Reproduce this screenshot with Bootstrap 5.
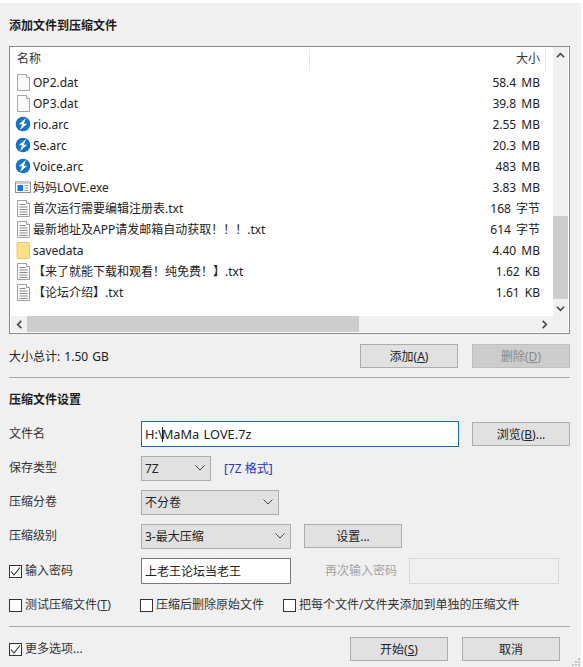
<!DOCTYPE html>
<html lang="zh-CN">
<head>
<meta charset="utf-8">
<title>添加文件到压缩文件</title>
<link href="https://cdn.jsdelivr.net/npm/bootstrap@5.3.0/dist/css/bootstrap.min.css" rel="stylesheet">
<style>
html,body{height:100%;background:#fff;overflow:hidden}
body{font-family:"Noto Sans","Noto Sans CJK SC",sans-serif;font-size:12px;line-height:16px;color:#222}
.dlg{width:581px;height:667px;margin-top:3px;background:#f0f0f0;padding:0 11px 0 9px;position:relative}
.head-t{font-weight:700;height:43px;padding-top:15px;color:#1c1c1c}
.filebox{height:288px;border:1px solid #8a8a8a;background:#fff;position:relative;display:grid;grid-template-columns:1fr 17px;grid-template-rows:1fr 17px}
.cols{height:25px;padding:2px 0 0 7px;color:#333}
.colname{width:293px;height:22px;line-height:20px;border-right:1px solid #e6e6e6}
.colsize{width:236px;height:22px;line-height:20px;text-align:right;padding-right:5px;border-right:1px solid #e6e6e6}
.frow{height:21px;line-height:21px;padding-left:5px;padding-right:2px;width:532px;white-space:nowrap}
.frow svg{width:16px;height:20px;flex:none;margin-right:2px}
.fname{flex:1}
.fsize{word-spacing:2px}
.vbar{background:#f0f0f0;grid-row:1;grid-column:2;display:flex;flex-direction:column;align-items:center;margin-left:1px;width:15px}
.vthumb{background:#cdcdcd;width:15px;height:83px;margin-top:153px}
.hbar{background:#f0f0f0;grid-row:2;grid-column:1/3;display:flex;align-items:center;margin:0 1px 1px}
.hthumb{background:#cdcdcd;width:332px;height:100%}
.arr{width:16px;height:16px;flex:none;display:flex;align-items:center;justify-content:center}
.arr svg{width:9px;height:9px}
.sumrow{height:24px;margin-top:10px}
.sumtxt{padding-top:2px;word-spacing:1px}
.w98{width:98px;height:24px;padding:1px 0 0;font-size:12px;line-height:20px;border-radius:0;background:#e1e1e1;border:1px solid #adadad;color:#222;flex:none}
.w98.off,.w98:disabled{background:#cccccc;border-color:#bfbfbf;color:#8a8a8a;opacity:1}
.gap14{margin-left:14px}
.gap13{margin-left:13px}
.sep{height:1px;background:#a8a8a8;margin:0}
.sep1{margin-top:9px}
.set-t{font-weight:700;margin-top:14px;height:16px;color:#1c1c1c}
.lbl{width:132px;flex:none;color:#333;padding-top:0}
.r1{margin-top:13px;height:26px}
.r2{margin-top:8px;height:26px}
.r5{margin-top:9px;height:26px}
.boxinp{height:26px;border:1px solid #7a7a7a;background:#fff;border-radius:0;padding:1px 3px 0;line-height:23px;font-size:12px;color:#222}
.focusinp{width:318px;border-color:#0f6cbd;font-size:12.8px;word-spacing:1px}
.caret-bar{display:inline-block;width:1px;height:15px;background:#111;vertical-align:-3px;margin:0 -1px}
.pwd{width:150px}
.pwd2{width:150px;border-color:#d9d9d9;background:#f0f0f0;margin-left:13px}
.sel{height:25px;border-radius:0;border:1px solid #adadad;background-color:#e1e1e1;font-size:12px;line-height:16px;padding:1px 18px 0 3px;color:#222;
background-image:url("data:image/svg+xml,%3csvg xmlns='http://www.w3.org/2000/svg' viewBox='0 0 10 6'%3e%3cpath fill='none' stroke='%23444' d='M.5.5 5 5 9.5.5'/%3e%3c/svg%3e");background-size:10px 6px;background-position:right 5px center}
.s70{width:70px}.s138{width:138px}.s150{width:150px}
.fmt{margin-left:13px;color:#2a33c8;font-size:12px;padding-top:2px}
.ck{width:13px;height:13px;margin:0 3px 0 0;flex:none;border-radius:0!important;border:1px solid #333;background-color:#fff}
.ck:checked{background-color:#fff;border-color:#333;background-image:url("data:image/svg+xml,%3csvg xmlns='http://www.w3.org/2000/svg' viewBox='0 0 13 13'%3e%3cpath fill='none' stroke='%23222' stroke-width='1.1' d='M2 6.5 5 10 11 2.5'/%3e%3c/svg%3e");background-size:13px 13px}
.gray-l{color:#a3a3a3;margin-left:34px;width:71px;white-space:nowrap;word-spacing:-3px}
.optrow{height:16px;margin-top:13px}
.opt{display:flex;align-items:center;white-space:nowrap;color:#333}
.o1{width:131px}.o2{width:143px}
.sep2{margin-top:13px;width:561px}
.footr{margin-top:10px;height:24px;width:551px}
.grip{position:absolute;right:0;bottom:3px;width:11px;height:11px}
</style>
</head>
<body>
<svg width="0" height="0" class="position-absolute">
<symbol id="i-blank" viewBox="0 0 16 20"><path d="M2.500 2.500h9l3 3v13h-12z" fill="#fafafa" stroke="#a6a6a6"/><path d="M11.500 2.500v3h3" fill="#fff" stroke="#a6a6a6"/></symbol>
<symbol id="i-txt" viewBox="0 0 16 20"><path d="M2.500 2.500h9l3 3v13h-12z" fill="#fafafa" stroke="#a0a0a0"/><path d="M11.500 2.500v3h3" fill="#fff" stroke="#a0a0a0"/><path d="M4.500 6.500h6M4.500 9h8M4.500 11.500h8M4.500 14h8M4.500 16.500h8" stroke="#8a8a8a"/></symbol>
<symbol id="i-arc" viewBox="0 0 16 20"><circle cx="8" cy="10" r="7.300" fill="#1673c5"/><path d="M11 4 3.800 10.200h3.400L5 16l7.200-6.200H8.800z" fill="#fff"/></symbol>
<symbol id="i-exe" viewBox="0 0 16 20"><rect x=".5" y="5" width="15" height="10.500" fill="#fbfbfb" stroke="#8f8f8f"/><rect x="1" y="5.500" width="14" height="1.500" fill="#d0d0d0"/><rect x="2.500" y="8" width="5.500" height="6" fill="#1478d4"/><path d="M9.500 8.500h4M9.500 11h4M9.500 13.500h4" stroke="#9a9a9a"/></symbol>
<symbol id="i-dir" viewBox="0 0 16 20"><path d="M2.500 2.500h11q1 0 1 1v14q0 1-1 1h-11q-.5 0-.5-1V3q0-.5.500-.5z" fill="#fbdf89" stroke="#e9c86a"/></symbol>
</svg>
<div class="dlg">
  <div class="head-t">添加文件到压缩文件</div>
  <div class="filebox">
    <div class="overflow-hidden">
      <div class="cols d-flex"><div class="colname">名称</div><div class="colsize">大小</div></div>
      <div class="frow d-flex"><svg><use href="#i-blank"/></svg><span class="fname">OP2.dat</span><span class="fsize">58.4 MB</span></div>
      <div class="frow d-flex"><svg><use href="#i-blank"/></svg><span class="fname">OP3.dat</span><span class="fsize">39.8 MB</span></div>
      <div class="frow d-flex"><svg><use href="#i-arc"/></svg><span class="fname">rio.arc</span><span class="fsize">2.55 MB</span></div>
      <div class="frow d-flex"><svg><use href="#i-arc"/></svg><span class="fname">Se.arc</span><span class="fsize">20.3 MB</span></div>
      <div class="frow d-flex"><svg><use href="#i-arc"/></svg><span class="fname">Voice.arc</span><span class="fsize">483 MB</span></div>
      <div class="frow d-flex"><svg><use href="#i-exe"/></svg><span class="fname">妈妈LOVE.exe</span><span class="fsize">3.83 MB</span></div>
      <div class="frow d-flex"><svg><use href="#i-txt"/></svg><span class="fname">首次运行需要编辑注册表.txt</span><span class="fsize">168 字节</span></div>
      <div class="frow d-flex"><svg><use href="#i-txt"/></svg><span class="fname">最新地址及APP请发邮箱自动获取！！！.txt</span><span class="fsize">614 字节</span></div>
      <div class="frow d-flex"><svg><use href="#i-dir"/></svg><span class="fname">savedata</span><span class="fsize">4.40 MB</span></div>
      <div class="frow d-flex"><svg><use href="#i-txt"/></svg><span class="fname">【来了就能下载和观看！纯免费！】.txt</span><span class="fsize">1.62 KB</span></div>
      <div class="frow d-flex"><svg><use href="#i-txt"/></svg><span class="fname">【论坛介绍】.txt</span><span class="fsize">1.61 KB</span></div>
    </div>
    <div class="vbar">
      <div class="arr"><svg viewBox="0 0 10 10"><path d="M1 7 5 3l4 4" fill="none" stroke="#444" stroke-width="1.800"/></svg></div>
      <div class="vthumb"></div>
      <div class="arr mt-auto"><svg viewBox="0 0 10 10"><path d="M1 3l4 4 4-4" fill="none" stroke="#444" stroke-width="1.800"/></svg></div>
    </div>
    <div class="hbar">
      <div class="arr"><svg viewBox="0 0 10 10"><path d="M7 1 3 5l4 4" fill="none" stroke="#444" stroke-width="1.800"/></svg></div>
      <div class="hthumb"></div>
      <div class="arr ms-auto me-3"><svg viewBox="0 0 10 10"><path d="M3 1l4 4-4 4" fill="none" stroke="#444" stroke-width="1.800"/></svg></div>
    </div>
  </div>
  <div class="sumrow d-flex align-items-center">
    <span class="me-auto sumtxt">大小总计: 1.50 GB</span>
    <button class="btn w98" type="button">添加(<u>A</u>)</button>
    <button class="btn w98 off gap14" type="button" disabled>删除(<u>D</u>)</button>
  </div>
  <div class="sep sep1"></div>
  <div class="set-t">压缩文件设置</div>
  <div class="r1 d-flex align-items-center">
    <span class="lbl">文件名</span>
    <div class="boxinp focusinp">H:\<span class="caret-bar"></span>MaMa LOVE.7z</div>
    <button class="btn w98 ms-auto" type="button">浏览(<u>B</u>)...</button>
  </div>
  <div class="r2 d-flex align-items-center">
    <span class="lbl">保存类型</span>
    <select class="form-select sel s70"><option>7Z</option></select>
    <span class="fmt">[7Z 格式]</span>
  </div>
  <div class="r2 d-flex align-items-center">
    <span class="lbl">压缩分卷</span>
    <select class="form-select sel s138"><option>不分卷</option></select>
  </div>
  <div class="r2 d-flex align-items-center">
    <span class="lbl">压缩级别</span>
    <select class="form-select sel s150"><option>3-最大压缩</option></select>
    <button class="btn w98 gap13" type="button">设置...</button>
  </div>
  <div class="r5 d-flex align-items-center">
    <label class="opt lbl"><input class="form-check-input ck" type="checkbox" checked>输入密码</label>
    <div class="boxinp pwd">上老王论坛当老王</div>
    <span class="gray-l">再次输入 密码</span>
    <div class="boxinp pwd2"></div>
  </div>
  <div class="optrow d-flex align-items-center">
    <label class="opt o1"><input class="form-check-input ck" type="checkbox">测试压缩文件(<u>T</u>)</label>
    <label class="opt o2"><input class="form-check-input ck" type="checkbox">压缩后删除原始文件</label>
    <label class="opt"><input class="form-check-input ck" type="checkbox">把每个文件/文件夹添加到单独的压缩文件</label>
  </div>
  <div class="sep sep2"></div>
  <div class="footr d-flex align-items-center">
    <label class="opt me-auto"><input class="form-check-input ck" type="checkbox" checked>更多选项...</label>
    <button class="btn w98" type="button">开始(<u>S</u>)</button>
    <button class="btn w98 gap14" type="button">取消</button>
  </div>
  <svg class="grip" viewBox="0 0 11 11"><path d="M8 2h2v2H8zM5 5h2v2H5zM8 5h2v2H8zM2 8h2v2H2zM5 8h2v2H5zM8 8h2v2H8z" fill="#c4c4c4"/></svg>
</div>
<script src="https://cdn.jsdelivr.net/npm/bootstrap@5.3.0/dist/js/bootstrap.bundle.min.js"></script>
</body>
</html>
